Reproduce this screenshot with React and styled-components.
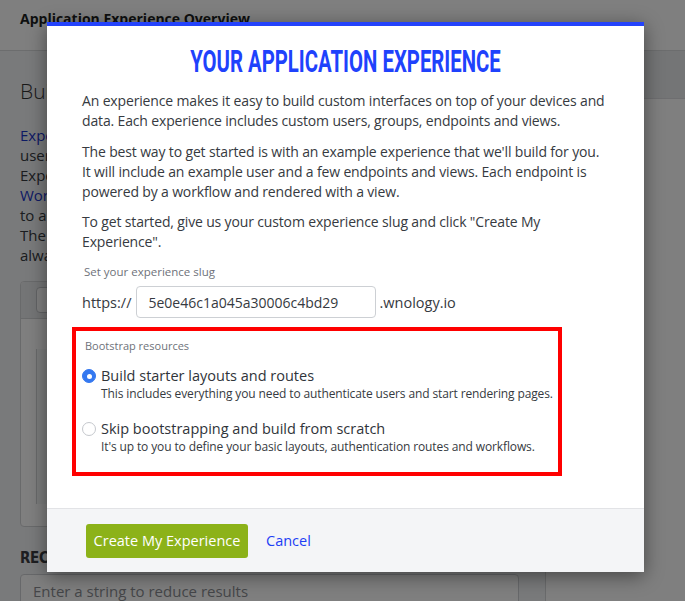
import React from "react";
import styled, { createGlobalStyle } from "styled-components";

const GlobalStyle = createGlobalStyle`
  html, body {
    margin: 0;
    padding: 0;
    height: 100%;
    font-family: "Open Sans", "Noto Sans", sans-serif;
    color: #363a41;
  }
  #root { height: 100%; }
`;

// ---------- page behind the modal ----------
const Page = styled.div`
  position: relative;
  height: 100vh;
  overflow: hidden;
  background: #f3f4f6;
`;

const TopBar = styled.header`
  height: 51px;
  box-sizing: border-box;
  padding: 9px 20px 0;
  background: #fff;
  border-bottom: 1px solid #d9dadd;
  font-size: 14px;
  font-weight: 700;
  color: #1d1f22;
`;

const Columns = styled.div`
  display: grid;
  grid-template-columns: 545px 1fr;
  height: calc(100% - 51px);
`;

const MainCol = styled.main`
  padding: 20px 26px 0 20px;
`;

const SideCol = styled.aside`
  background: #fff;
  border-left: 1px solid #d5d6d9;
`;

const SideBand = styled.div`
  height: 47px;
  background: #e9eaec;
  border-bottom: 1px solid #dcdde0;
`;

const PageHeading = styled.h2`
  margin: 6px 0 20px;
  font-size: 21px;
  font-weight: 300;
  color: #333;
`;

const Intro = styled.p`
  margin: 0 0 16px;
  font-size: 15px;
  line-height: 20px;
  white-space: nowrap;
`;

const BgLink = styled.a`
  color: #1a36c9;
  text-decoration: none;
`;

const Card = styled.div`
  height: 244px;
  border: 1px solid #d3d4d7;
  border-radius: 4px;
  background: #fff;
  overflow: hidden;
`;

const CardHead = styled.div`
  height: 36px;
  display: flex;
  align-items: center;
  padding: 0 15px;
  background: #e9eaec;
  border-bottom: 1px solid #d3d4d7;
`;

const GhostButton = styled.span`
  width: 60px;
  height: 24px;
  border: 1px solid #c4c6ca;
  border-radius: 4px;
  background: #fff;
`;

const CardBody = styled.div`
  margin: 30px 15px;
  height: 155px;
  border-left: 1px solid #d3d4d7;
  background: #f7f8f9;
`;

const SectionTitle = styled.h3`
  margin: 22px 0 7px;
  font-family: "DejaVu Sans Condensed", Roboto, sans-serif;
  font-size: 15px;
  font-weight: 700;
  color: #3b3d42;
  letter-spacing: -0.3px;
`;

const Search = styled.div`
  width: 499px;
  height: 38px;
  box-sizing: border-box;
  padding: 6px 12px 0;
  border: 1px solid #cfd1d4;
  border-radius: 4px;
  background: #fff;
  font-size: 15px;
  line-height: 20px;
  color: #8a8d92;
`;

// ---------- modal ----------
const Overlay = styled.div`
  position: absolute;
  inset: 0;
  background: rgba(0, 0, 0, 0.5);
  display: flex;
  justify-content: center;
  align-items: flex-start;
  padding: 22px 0 0 6px;
`;

const Modal = styled.div`
  width: 597px;
  background: #fff;
  border-top: 4px solid #2443fb;
  box-shadow: 0 4px 18px rgba(0, 0, 0, 0.45);
`;

const Body = styled.div`
  padding: 16px 35px 32px;
`;

const Title = styled.h1`
  margin: 0 0 11px;
  height: 38px;
  line-height: 38px;
  text-align: center;
  white-space: nowrap;
  font-family: Roboto, "Liberation Sans", sans-serif;
  font-weight: 700;
  font-size: 32px;
  color: #1f42fc;
`;

const Squeeze = styled.span`
  display: inline-block;
  transform: scaleX(0.635);
`;

const Para = styled.p`
  margin: 0 0 10.5px;
  font-size: 14px;
  line-height: 20px;
  letter-spacing: -0.15px;
  color: #363a41;
`;

const SmallLabel = styled.div`
  margin: 12px 0 6px 2px;
  font-size: 11.5px;
  line-height: 16px;
  color: #6e727a;
`;

const SlugRow = styled.div`
  display: flex;
  align-items: center;
  gap: 3px;
  font-size: 14.5px;
  color: #363a41;
`;

const SlugInput = styled.input`
  width: 240px;
  height: 32px;
  box-sizing: border-box;
  margin-left: 2px;
  padding: 0 11px;
  border: 1px solid #cdd0d4;
  border-radius: 4px;
  font-family: inherit;
  font-size: 14px;
  color: #363a41;
  outline: none;
`;

const Resources = styled.fieldset`
  width: 490px;
  box-sizing: border-box;
  margin: 9px 0 0 -10px;
  padding: 8px 0 17px 6px;
  border: 4px solid #ff0000;
`;

const Legend = styled.div`
  margin: 0 0 13px 3px;
  font-size: 11px;
  line-height: 14px;
  color: #6e727a;
`;

const Option = styled.label`
  display: grid;
  grid-template-columns: 14px 1fr;
  column-gap: 5px;
  margin-bottom: ${(p) => (p.$last ? "0" : "17px")};
`;

const Dot = styled.span`
  width: 14px;
  height: 14px;
  margin-top: 3px;
  box-sizing: border-box;
  border-radius: 50%;
  display: flex;
  align-items: center;
  justify-content: center;
  background: ${(p) => (p.$on ? "#3478f0" : "#fff")};
  border: 1px solid ${(p) => (p.$on ? "#3478f0" : "#c5c8cd")};
  &::after {
    content: "";
    width: 5px;
    height: 5px;
    border-radius: 50%;
    background: #fff;
    display: ${(p) => (p.$on ? "block" : "none")};
  }
`;

const OptionName = styled.div`
  font-size: 14.5px;
  line-height: 20px;
  color: #30343a;
`;

const OptionHint = styled.div`
  font-size: 12px;
  line-height: 16px;
  letter-spacing: -0.12px;
  white-space: nowrap;
  color: #363a41;
`;

const Footer = styled.div`
  height: 63px;
  display: flex;
  align-items: center;
  gap: 18px;
  padding: 0 39px;
  background: #f4f5f7;
  border-top: 1px solid #e2e3e6;
`;

const PrimaryButton = styled.button`
  width: 162px;
  height: 34px;
  border: none;
  border-radius: 3px;
  background: #8cb219;
  color: #fff;
  font-family: inherit;
  font-size: 14.5px;
  font-weight: 500;
  cursor: pointer;
`;

const LinkButton = styled.button`
  border: none;
  background: none;
  padding: 0;
  font-family: inherit;
  font-size: 14.5px;
  color: #1d3ef5;
  cursor: pointer;
`;

const options = [
  {
    name: "Build starter layouts and routes",
    hint: "This includes everything you need to authenticate users and start rendering pages.",
    on: true,
  },
  {
    name: "Skip bootstrapping and build from scratch",
    hint: "It's up to you to define your basic layouts, authentication routes and workflows.",
    on: false,
  },
];

export default function App() {
  return (
    <>
      <GlobalStyle />
      <Page>
        <TopBar>Application Experience Overview</TopBar>
        <Columns>
          <MainCol>
            <PageHeading>Build an Experience</PageHeading>
            <Intro>
              <BgLink>Experiences</BgLink> let you build custom interfaces for your
              <br />
              users on top of your devices and data.
              <br />
              Experience endpoints are powered by
              <br />
              <BgLink>Workflows</BgLink> and rendered with views, allowing you
              <br />
              to add any logic you need.
              <br />
              The experience slug is part of the URL and can
              <br />
              always be changed later.
            </Intro>
            <Card>
              <CardHead>
                <GhostButton />
              </CardHead>
              <CardBody />
            </Card>
            <SectionTitle>RECENT REQUESTS</SectionTitle>
            <Search>Enter a string to reduce results</Search>
          </MainCol>
          <SideCol>
            <SideBand />
          </SideCol>
        </Columns>

        <Overlay>
          <Modal>
            <Body>
              <Title>
                <Squeeze>YOUR APPLICATION EXPERIENCE</Squeeze>
              </Title>
              <Para>
                An experience makes it easy to build custom interfaces on top of your devices and
                data. Each experience includes custom users, groups, endpoints and views.
              </Para>
              <Para>
                The best way to get started is with an example experience that we'll build for you.
                It will include an example user and a few endpoints and views. Each endpoint is
                powered by a workflow and rendered with a view.
              </Para>
              <Para>
                To get started, give us your custom experience slug and click "Create My
                Experience".
              </Para>
              <SmallLabel>Set your experience slug</SmallLabel>
              <SlugRow>
                https://
                <SlugInput defaultValue="5e0e46c1a045a30006c4bd29" />
                .wnology.io
              </SlugRow>
              <Resources>
                <Legend>Bootstrap resources</Legend>
                {options.map((o, i) => (
                  <Option key={o.name} $last={i === options.length - 1}>
                    <Dot $on={o.on} />
                    <div>
                      <OptionName>{o.name}</OptionName>
                      <OptionHint>{o.hint}</OptionHint>
                    </div>
                  </Option>
                ))}
              </Resources>
            </Body>
            <Footer>
              <PrimaryButton>Create My Experience</PrimaryButton>
              <LinkButton>Cancel</LinkButton>
            </Footer>
          </Modal>
        </Overlay>
      </Page>
    </>
  );
}
